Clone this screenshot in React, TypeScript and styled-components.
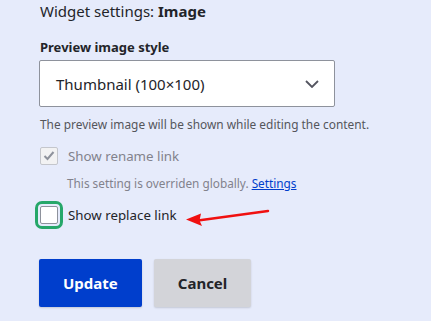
import React from "react";
import styled, { createGlobalStyle } from "styled-components";

const GlobalStyle = createGlobalStyle`
  html, body {
    margin: 0;
    padding: 0;
    background: #e6ebfb;
  }
  body {
    font-family: "Noto Sans", "Open Sans", Arial, sans-serif;
    color: #232429;
  }
`;

const Page = styled.div`
  width: 431px;
  height: 321px;
  padding: 0 40px;
  box-sizing: border-box;
  overflow: hidden;
  position: relative;
`;

const Title = styled.h2`
  margin: 0;
  padding-top: 1px;
  font-size: 15px;
  line-height: 20px;
  font-weight: 400;
  color: #232429;

  strong {
    font-weight: 700;
  }
`;

const FieldLabel = styled.label`
  display: block;
  margin-top: 17px;
  font-size: 13px;
  line-height: 18px;
  font-weight: 700;
  color: #232429;
`;

const Select = styled.div`
  margin-top: 4px;
  margin-left: -1px;
  width: 296px;
  height: 47px;
  box-sizing: border-box;
  background: #fff;
  border: 1px solid #8e929c;
  border-radius: 2px;
  display: flex;
  align-items: center;
  justify-content: space-between;
  padding: 0 15px 0 16px;
  font-size: 15px;
  color: #232429;
`;

const Help = styled.div`
  margin-top: 9px;
  font-size: 11.9px;
  line-height: 16px;
  color: #55565b;
`;

const CheckRow = styled.div<{ disabled?: boolean }>`
  display: flex;
  align-items: center;
  gap: 10px;
  margin-top: ${(p) => (p.disabled ? "14px" : "14px")};
  font-size: 13.3px;
  line-height: 20px;
  color: ${(p) => (p.disabled ? "#82828c" : "#232429")};
`;

const Box = styled.span<{ focused?: boolean; disabled?: boolean }>`
  width: 18px;
  height: 18px;
  box-sizing: border-box;
  flex: none;
  border-radius: 2px;
  border: 1px solid ${(p) => (p.disabled ? "#c4c6cc" : "#8e929c")};
  background: ${(p) => (p.disabled ? "#f2f2f3" : "#fff")};
  display: flex;
  align-items: center;
  justify-content: center;
  outline: ${(p) => (p.focused ? "3px solid #26a769" : "none")};
  outline-offset: 2px;
`;

const Description = styled.div`
  margin-top: 9px;
  padding-left: 27px;
  font-size: 11.8px;
  line-height: 16px;
  color: #82828c;

  a {
    color: #003ecc;
    text-decoration: underline;
  }
`;

const Actions = styled.div`
  display: flex;
  gap: 12px;
  margin-top: 34px;
  margin-left: -1px;
`;

const Button = styled.button<{ primary?: boolean }>`
  height: 48px;
  padding: 0 24px;
  border: none;
  border-radius: 2px;
  font-family: inherit;
  font-size: 15px;
  font-weight: 700;
  background: ${(p) => (p.primary ? "#003ecc" : "#d3d4d9")};
  color: ${(p) => (p.primary ? "#fff" : "#232429")};
  box-shadow: 0 1px 2px rgba(0, 0, 0, 0.15);
  cursor: pointer;
`;

const Arrow = styled.svg`
  position: absolute;
  left: 180px;
  top: 204px;
`;

const App: React.FC = () => {
  return (
    <>
      <GlobalStyle />
      <Page>
        <Title>
          Widget settings: <strong>Image</strong>
        </Title>
        <FieldLabel>Preview image style</FieldLabel>
        <Select>
          <span>Thumbnail (100×100)</span>
          <svg width="14" height="8" viewBox="0 0 14 8">
            <path d="M1 1l6 6 6-6" fill="none" stroke="#545560" strokeWidth="1.8" />
          </svg>
        </Select>
        <Help>The preview image will be shown while editing the content.</Help>
        <CheckRow disabled>
          <Box disabled>
            <svg width="12" height="10" viewBox="0 0 12 10">
              <path d="M1.5 5l3 3 6-7" fill="none" stroke="#8e929c" strokeWidth="2" />
            </svg>
          </Box>
          Show rename link
        </CheckRow>
        <Description>
          This setting is overriden globally. <a href="#">Settings</a>
        </Description>
        <CheckRow>
          <Box focused />
          Show replace link
        </CheckRow>
        <Actions>
          <Button primary>Update</Button>
          <Button>Cancel</Button>
        </Actions>
        <Arrow width="92" height="24" viewBox="0 0 92 24">
          <path d="M88 7L18 16.5" stroke="#f01010" strokeWidth="2.5" strokeLinecap="round" />
          <path d="M6 15.5L21 9.5L19.5 16.5L22 22Z" fill="#f01010" />
        </Arrow>
      </Page>
    </>
  );
};

export default App;
